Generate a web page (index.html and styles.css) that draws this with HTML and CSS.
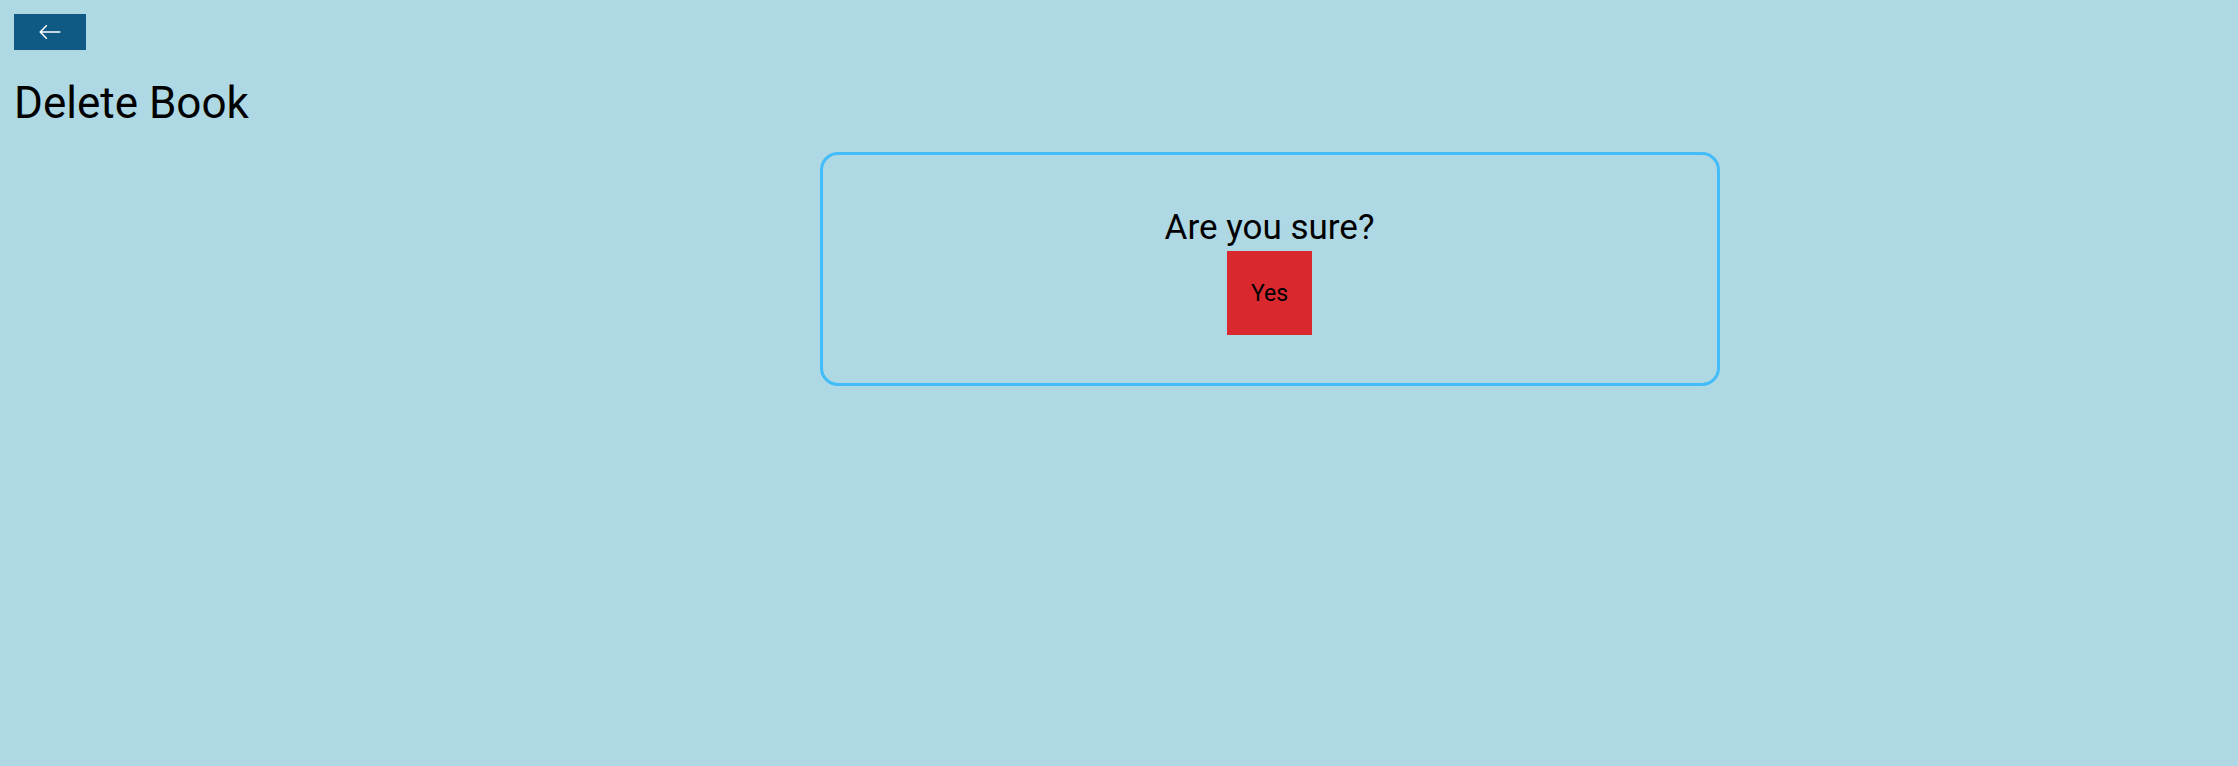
FILE: index.html
```html
<!DOCTYPE html>
<html lang="en">
<head>
<meta charset="utf-8">
<meta name="viewport" content="width=device-width, initial-scale=1">
<title>Delete Book</title>
<link rel="stylesheet" href="styles.css">
</head>
<body>
<main class="page">
  <a class="back" href="#" aria-label="Back">
    <svg class="back-icon" viewBox="0 0 24 24" fill="none" stroke="currentColor" stroke-width="1.6" stroke-linecap="round" stroke-linejoin="round" aria-hidden="true">
      <path d="M8.4 5.7 2.2 12l6.2 6.3M2.2 12h19.6"/>
    </svg>
  </a>
  <h1 class="title">Delete Book</h1>
  <section class="card">
    <h2 class="question">Are you sure?</h2>
    <button class="confirm" type="button">Yes</button>
  </section>
</main>
</body>
</html>
```
FILE: styles.css
```css
* {
  box-sizing: border-box;
}

body {
  margin: 0;
  background: #aed8e4;
  color: #000;
  font-family: Roboto, "Liberation Sans", sans-serif;
}

.page {
  padding: 14px;
}

.back {
  display: flex;
  align-items: center;
  justify-content: center;
  width: 72px;
  height: 36px;
  background: #0f5a85;
  color: #fff;
}

.back-icon {
  width: 24px;
  height: 24px;
}

.title {
  margin: 28px 0 24px;
  font-size: 44px;
  font-weight: 400;
  line-height: 50px;
}

.card {
  display: flex;
  flex-direction: column;
  align-items: center;
  max-width: 900px;
  margin-left: 36.45%;
  padding: 50px 48px 48px;
  border: 3px solid #42bdfa;
  border-radius: 18px;
}

.question {
  margin: 0;
  font-size: 35px;
  font-weight: 400;
  line-height: 46px;
}

.confirm {
  padding: 26px 24px 24px;
  border: 0;
  border-radius: 0;
  background: #da292e;
  color: #000;
  font: inherit;
  font-size: 23px;
  line-height: 34px;
}
```
